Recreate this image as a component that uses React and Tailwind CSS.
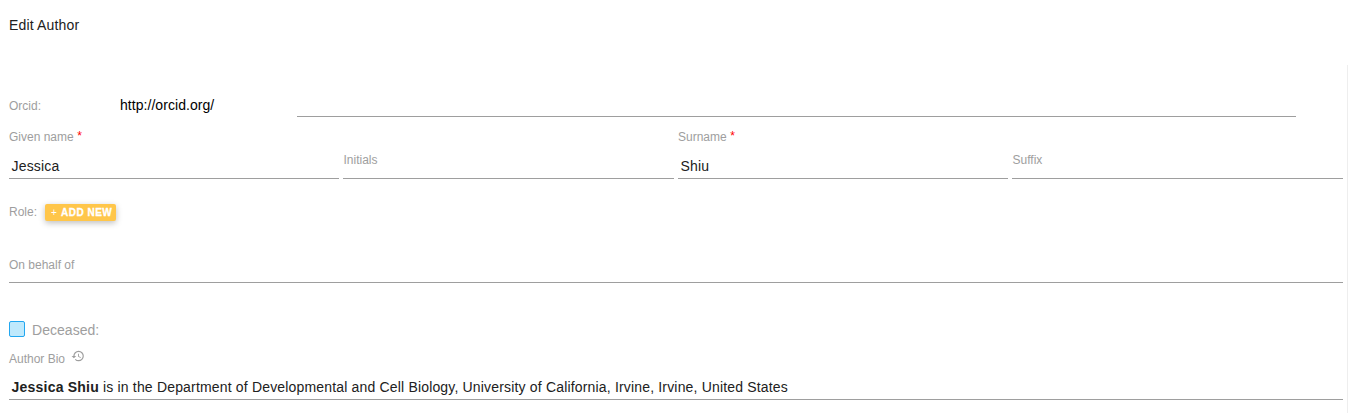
function Label({ children, required }) {
  return (
    <span className="block text-[12px] leading-4 text-[#9e9e9e] whitespace-nowrap">
      {children}
      {required && <span className="inline-block -translate-y-px pl-[3.5px] text-[#ff0000]">*</span>}
    </span>
  );
}

function NameField({ label, value, required }) {
  return (
    <div className={`h-[62px] border-b border-[#9e9e9e] ${value ? "pt-3" : "pt-[35px] pl-[0.5px]"}`}>
      <Label required={required}>{label}</Label>
      {value && <div className="pt-[11px] pl-[2.5px] text-[14px] leading-5 tracking-[0.19px] text-[#212121]">{value}</div>}
    </div>
  );
}

function HistoryIcon() {
  return (
    <svg viewBox="0 0 24 24" className="h-[14px] w-[14px] fill-[#9e9e9e]">
      <path d="M13 3a9 9 0 0 0-9 9H1l3.89 3.89.07.14L9 12H6c0-3.87 3.13-7 7-7s7 3.13 7 7-3.13 7-7 7c-1.93 0-3.68-.79-4.94-2.06l-1.42 1.42A8.954 8.954 0 0 0 13 21a9 9 0 0 0 0-18zm-1 5v5l4.28 2.54.72-1.21-3.5-2.08V8H12z" />
    </svg>
  );
}

export default function App() {
  return (
    <div className="flex h-[413px] flex-col overflow-hidden bg-white font-['Liberation_Sans',Arial,sans-serif]">
      <header className="h-[65px] shrink-0 pt-[15px] pl-[9px] text-[14px] leading-5 tracking-[0.17px] text-[#212121]">Edit Author</header>
      <main className="flex-1 border-r border-[#eeeeee] pr-1 pl-[9px]">
        <div className="flex h-[52px] pr-[47px]">
          <div className="w-[111px] pt-[33px]">
            <Label>Orcid:</Label>
          </div>
          <div className="w-[177px] pt-[30px] text-[14px] leading-5 tracking-[0.05px] text-black">http://orcid.org/</div>
          <div className="flex-1 border-b border-[#9e9e9e]" />
        </div>
        <div className="grid grid-cols-[330px_331px_330px_331px] gap-1">
          <NameField label="Given name" value="Jessica" required />
          <NameField label="Initials" />
          <NameField label="Surname" value="Shiu" required />
          <NameField label="Suffix" />
        </div>
        <div className="flex h-[69px] items-start pt-[25px]">
          <Label>Role:</Label>
          <button className="ml-2 flex h-[17px] w-[71px] items-center rounded-[2px] bg-[#ffc64a] pl-1.5 text-[10px] font-bold leading-none tracking-[0.5px] text-white shadow-[0_2px_6px_rgba(0,0,0,0.26)]">
            <span className="w-[10px] text-left font-normal">+</span>
            <span className="whitespace-nowrap [-webkit-text-stroke:0.3px_white]">ADD NEW</span>
          </button>
        </div>
        <div className="h-[35px] border-b border-[#9e9e9e] pt-[9px]">
          <Label>On behalf of</Label>
        </div>
        <div className="flex h-[66px] items-start pt-[37px]">
          <span className="mt-px h-4 w-4 rounded-[2px] border border-[#22a7f0] bg-[#bfe9fc]" />
          <span className="pl-[7px] text-[14px] leading-5 tracking-[0.04px] text-[#9e9e9e]">Deceased:</span>
        </div>
        <div className="h-[51px] border-b border-[#9e9e9e]">
          <div className="flex h-[19px]">
            <div className="pt-0.5">
              <Label>Author Bio</Label>
            </div>
            <span className="ml-1.5">
              <HistoryIcon />
            </span>
          </div>
          <div className="pt-[9px] pl-[2.5px] text-[14px] leading-5 tracking-[0.172px] text-[#212121]">
            <b className="tracking-[0.22px]">Jessica Shiu</b> is in the Department of Developmental and Cell Biology, University of California, Irvine, Irvine, United States
          </div>
        </div>
      </main>
    </div>
  );
}
